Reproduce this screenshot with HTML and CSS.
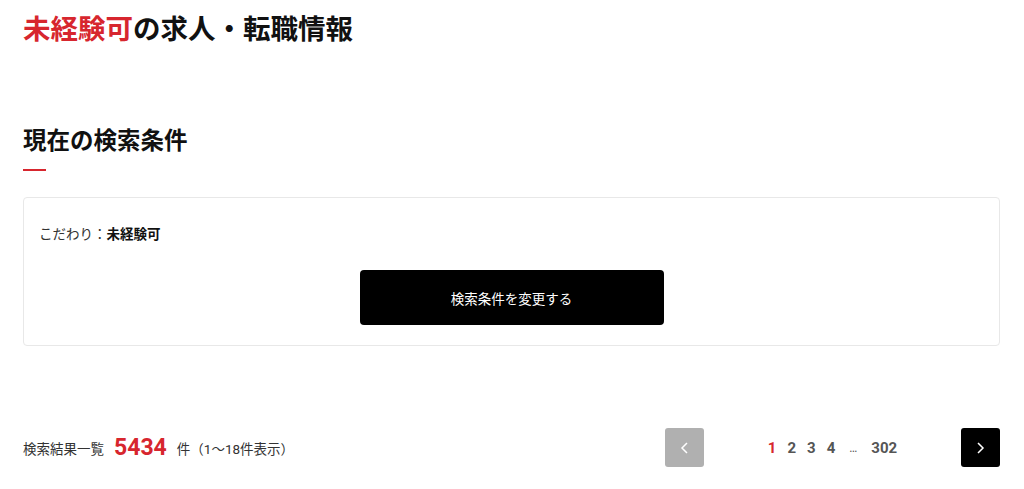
FILE: index.html
```html
<!DOCTYPE html>
<html lang="ja">
<head>
    <meta charset="UTF-8">
    <meta name="viewport" content="width=device-width, initial-scale=1.0">
    <title>未経験可の求人・転職情報</title>
    <link rel="stylesheet" href="styles.css">
</head>
<body>
    <div class="container">
        <h1 class="page-title"><span class="accent">未経験可</span>の求人・転職情報</h1>

        <!-- 現在の検索条件 -->
        <section class="conditions">
            <h2 class="section-title">現在の検索条件</h2>
            <div class="condition-box">
                <p class="condition-text">こだわり：<strong>未経験可</strong></p>
                <div class="condition-action">
                    <button class="change-button">検索条件を変更する</button>
                </div>
            </div>
        </section>

        <!-- 検索結果 -->
        <div class="result-bar">
            <div class="result-count">
                検索結果一覧<span class="count-number">5434</span>件（1〜18件表示）
            </div>
            <nav class="pagination">
                <a class="page-arrow disabled" href="#">
                    <svg width="14" height="14" viewBox="0 0 14 14"><path d="M9 2 L4 7 L9 12" fill="none" stroke="#fff" stroke-width="1.5"/></svg>
                </a>
                <div class="page-numbers">
                    <a class="page-number current" href="#">1</a>
                    <a class="page-number" href="#">2</a>
                    <a class="page-number" href="#">3</a>
                    <a class="page-number" href="#">4</a>
                    <span class="page-dots">…</span>
                    <a class="page-number" href="#">302</a>
                </div>
                <a class="page-arrow" href="#">
                    <svg width="14" height="14" viewBox="0 0 14 14"><path d="M5 2 L10 7 L5 12" fill="none" stroke="#fff" stroke-width="1.5"/></svg>
                </a>
            </nav>
        </div>
    </div>
</body>
</html>
```

FILE: styles.css
```css
/* General styles */
body {
    font-family: Roboto, "Noto Sans CJK JP", sans-serif;
    margin: 0;
    padding: 0;
    background-color: #fff;
    color: #111;
}

.container {
    padding: 0 24px 0 23px;
}

.page-title {
    margin: 11px 0 0;
    font-size: 27.5px;
    line-height: 38px;
    font-weight: bold;
}

.page-title .accent {
    color: #d7262e;
}

/* Conditions */
.conditions {
    margin-top: 76px;
}

.section-title {
    margin: 0;
    font-size: 23.5px;
    line-height: 32px;
    font-weight: bold;
}

.section-title::after {
    content: "";
    display: block;
    width: 23px;
    height: 2px;
    margin-top: 12px;
    background: #d7262e;
}

.condition-box {
    margin-top: 26px;
    border: 1px solid #e8e8e8;
    border-radius: 4px;
    padding: 26px 15px 20px;
}

.condition-text {
    margin: 0;
    font-size: 13.5px;
    line-height: 20px;
    color: #333;
}

.condition-text strong {
    color: #111;
}

.condition-action {
    display: flex;
    justify-content: center;
    margin-top: 26px;
}

.change-button {
    width: 304px;
    height: 55px;
    background: #000;
    color: #fff;
    border: none;
    border-radius: 4px;
    font-family: inherit;
    font-size: 13.5px;
    cursor: pointer;
}

/* Result bar */
.result-bar {
    display: flex;
    justify-content: space-between;
    align-items: center;
    margin-top: 82px;
}

.result-count {
    font-size: 13.5px;
    color: #333;
    display: flex;
    align-items: center;
}

.count-number {
    color: #d7262e;
    font-size: 23px;
    font-weight: bold;
    margin: 0 10px;
}

.pagination {
    width: 335px;
    display: flex;
    justify-content: space-between;
    align-items: center;
}

.page-arrow {
    width: 39px;
    height: 39px;
    background: #000;
    border-radius: 3px;
    display: flex;
    align-items: center;
    justify-content: center;
}

.page-arrow.disabled {
    background: #b0b0b0;
}

.page-numbers {
    display: flex;
    align-items: center;
    gap: 11px;
}

.page-number {
    font-size: 15px;
    font-weight: bold;
    color: #555;
    text-decoration: none;
}

.page-number.current {
    color: #d7262e;
}

.page-dots {
    font-size: 12px;
    color: #555;
    margin: 0 3px;
}
```
